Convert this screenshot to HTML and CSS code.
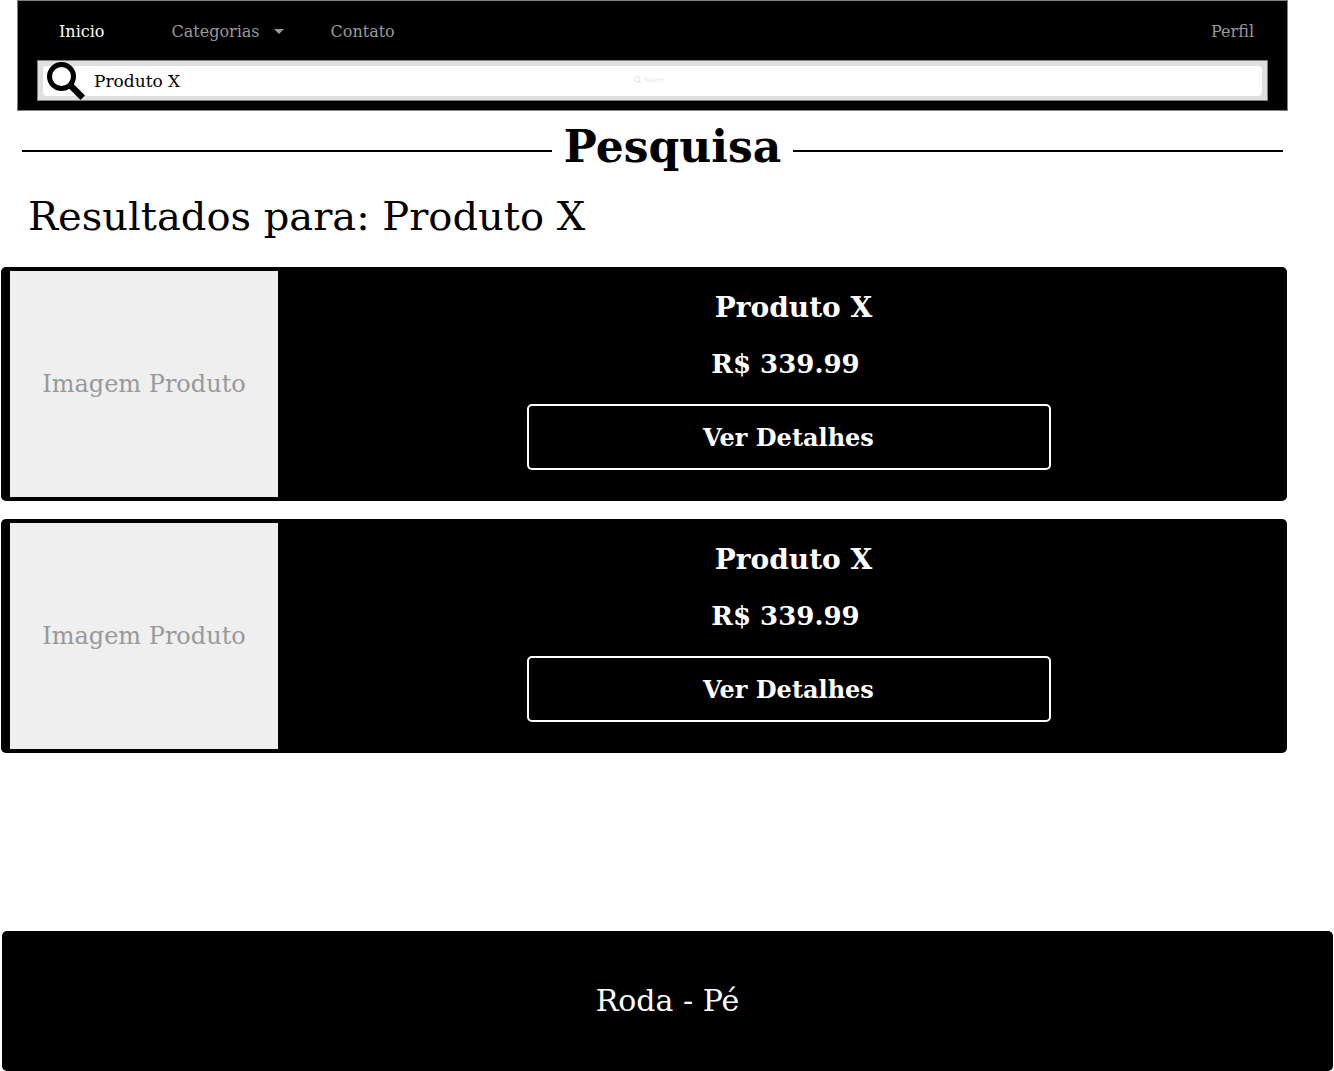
FILE: index.html
```html
<!DOCTYPE html>
<html lang="pt-BR">
<head>
<meta charset="utf-8">
<meta name="viewport" content="width=device-width, initial-scale=1">
<title>Pesquisa</title>
<link rel="stylesheet" href="styles.css">
</head>
<body>
<header class="header">
  <nav class="nav">
    <a class="nav-link nav-link-active" href="#">Inicio</a>
    <a class="nav-link nav-link-menu" href="#">Categorias
      <svg class="caret" viewBox="0 0 10 5" aria-hidden="true"><path d="M0 0h10L5 5z"/></svg>
    </a>
    <a class="nav-link" href="#">Contato</a>
    <a class="nav-link nav-link-profile" href="#">Perfil</a>
  </nav>
  <form class="search">
    <div class="search-box">
      <svg class="search-icon" viewBox="0 0 38 38" aria-hidden="true">
        <circle cx="14.5" cy="14.5" r="12" fill="none" stroke="#000" stroke-width="5"/>
        <path d="M20.500 25L25 20.500L38 33.500L33.500 38z"/>
      </svg>
      <input class="search-input" type="text" aria-label="Pesquisar produto" value="Produto X">
      <span class="search-hint">
        <svg class="hint-icon" viewBox="0 0 8 8" aria-hidden="true"><path d="M5.500 5.500L7.500 7.500M6 3.300a2.700 2.700 0 1 1-5.400 0a2.700 2.700 0 0 1 5.400 0z"/></svg>
        Search
      </span>
    </div>
  </form>
</header>
<main class="main">
  <h1 class="title">Pesquisa</h1>
  <h2 class="results-title">Resultados para: Produto X</h2>
  <section class="results">
    <article class="card">
      <div class="card-image">Imagem Produto</div>
      <div class="card-body">
        <h3 class="card-name">Produto X</h3>
        <p class="card-price">R$ 339.99</p>
        <button class="card-button" type="button">Ver Detalhes</button>
      </div>
    </article>
    <article class="card">
      <div class="card-image">Imagem Produto</div>
      <div class="card-body">
        <h3 class="card-name">Produto X</h3>
        <p class="card-price">R$ 339.99</p>
        <button class="card-button" type="button">Ver Detalhes</button>
      </div>
    </article>
  </section>
</main>
<footer class="footer">Roda - Pé</footer>
</body>
</html>
```
FILE: styles.css
```css
* {
  box-sizing: border-box;
}

body {
  display: flex;
  flex-direction: column;
  min-height: 100vh;
  margin: 0;
  background: #fff;
  color: #000;
  font-family: "DejaVu Serif", serif;
  font-size: 16px;
}

h1, h2, h3, p {
  margin: 0;
}

.header {
  margin: 0 46px 0 17px;
  padding: 0 19px 9px;
  border: 1px solid #808080;
  background: #000;
}

.nav {
  display: flex;
  align-items: center;
  height: 59px;
  padding: 2px 14px 0 22px;
}

.nav-link {
  margin-right: 47px;
  color: #999;
  line-height: 20px;
  text-decoration: none;
}

.nav-link-active {
  margin-right: 67px;
  color: #fff;
}

.nav-link-menu {
  display: flex;
  align-items: center;
  gap: 14px;
}

.nav-link-profile {
  margin: 0 0 0 auto;
}

.caret {
  width: 10px;
  height: 5px;
  fill: #999;
}

.search {
  padding: 5px 5px 4px;
  border: 1px solid #808080;
  background: #dfdfdf;
}

.search-box {
  position: relative;
  display: flex;
  align-items: center;
  gap: 9px;
  height: 30px;
  padding-left: 4px;
  border-radius: 4px;
  background: #fff;
}

.search-icon {
  flex: none;
  width: 38px;
  height: 38px;
}

.search-input {
  flex: 1;
  min-width: 0;
  padding: 0;
  border: 0;
  outline: 0;
  background: none;
  color: #000;
  font: inherit;
  font-size: 17px;
}

.search-hint {
  position: absolute;
  top: 9px;
  left: 0;
  right: 6px;
  display: flex;
  align-items: center;
  justify-content: center;
  gap: 2px;
  color: #e6e6e6;
  font: 6px/9px "DejaVu Sans", sans-serif;
  pointer-events: none;
}

.hint-icon {
  width: 8px;
  height: 8px;
  fill: none;
  stroke: #ddd;
}

.title {
  display: flex;
  align-items: center;
  gap: 12px;
  margin: 6px 51px 0 22px;
  font-size: 44px;
  line-height: 60px;
}

.title::before,
.title::after {
  content: "";
  flex: 53;
  height: 2px;
  margin-top: 8px;
  background: #000;
}

.title::after {
  flex-grow: 49;
}

.results-title {
  padding: 14px 28px 26px;
  font-size: 40px;
  font-weight: 400;
  line-height: 50px;
}

.results {
  display: grid;
  gap: 18px;
  margin: 0 47px 0 1px;
}

.card {
  display: flex;
  min-height: 234px;
  padding: 4px 0 4px 9px;
  border-radius: 5px;
  background: #000;
}

.card-image {
  display: flex;
  align-items: center;
  justify-content: center;
  width: 268px;
  background: #efefef;
  color: #999;
  font-size: 24px;
}

.card-body {
  flex: 1;
  display: flex;
  flex-direction: column;
  align-items: center;
  padding: 17px 0 0 12px;
  color: #fff;
  font-weight: 700;
}

.card-name {
  padding-left: 10px;
  font-size: 28px;
  line-height: 40px;
}

.card-price {
  margin: 16px 0 20px;
  padding-right: 6px;
  font-size: 26px;
  line-height: 40px;
}

.card-button {
  width: 524px;
  max-width: 100%;
  height: 66px;
  border: 2px solid #fff;
  border-radius: 5px;
  background: #000;
  color: #fff;
  font: inherit;
  font-size: 24px;
}

.footer {
  display: flex;
  align-items: center;
  justify-content: center;
  height: 140px;
  margin: auto 1px 0 2px;
  padding-bottom: 2px;
  border-radius: 5px;
  background: #000;
  color: #fff;
  font-size: 30px;
}
```
